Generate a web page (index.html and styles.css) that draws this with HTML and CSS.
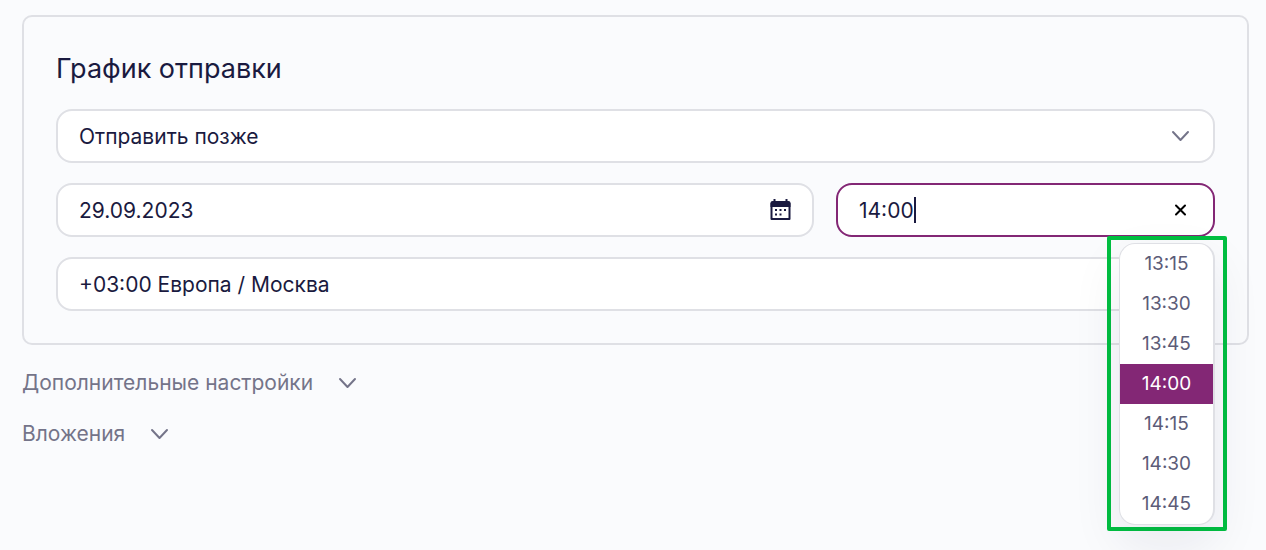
FILE: index.html
```html
<!DOCTYPE html>
<html lang="ru">
<head>
    <meta charset="UTF-8">
    <meta name="viewport" content="width=device-width, initial-scale=1.0">
    <title>График отправки</title>
    <link rel="stylesheet" href="styles.css">
</head>
<body>
    <form class="page">
        <section class="panel">
            <h2>График отправки</h2>
            <div class="field">
                <select class="control" aria-label="Когда отправить">
                    <option>Отправить позже</option>
                </select>
                <svg class="chevron field-icon" viewBox="0 0 24 24"><path d="M4 8l7.500 8 7.500-8"/></svg>
            </div>
            <div class="row">
                <div class="field">
                    <input class="control" type="text" value="29.09.2023" aria-label="Дата">
                    <button class="icon-btn field-icon" type="button" aria-label="Открыть календарь">
                        <svg viewBox="0 0 24 24">
                            <path class="cal-frame" d="M3.500 5.500h18v15.500h-18z"/>
                            <path class="cal-fill" d="M2.500 5a2 2 0 0 1 2-2h16a2 2 0 0 1 2 2v4h-20zM5.500 1h2v3h-2zM17.500 1h2v3h-2zM7 11h2v2H7zM11.500 11h2v2h-2zM16 11h2v2h-2zM7 15.500h2v2H7zM11.500 15.500h2v2h-2z"/>
                        </svg>
                    </button>
                </div>
                <div class="field">
                    <input class="control active" type="text" value="14:00" aria-label="Время">
                    <span class="caret"></span>
                    <button class="icon-btn field-icon" type="button" aria-label="Очистить">
                        <svg class="cross" viewBox="0 0 24 24"><path d="M7 7.500l9 9M16 7.500l-9 9"/></svg>
                    </button>
                    <div class="highlight">
                        <ul class="times" role="listbox" aria-label="Время">
                            <li role="option">13:15</li>
                            <li role="option">13:30</li>
                            <li role="option">13:45</li>
                            <li role="option" class="selected" aria-selected="true">14:00</li>
                            <li role="option">14:15</li>
                            <li role="option">14:30</li>
                            <li role="option">14:45</li>
                        </ul>
                    </div>
                </div>
            </div>
            <div class="field">
                <select class="control" aria-label="Часовой пояс">
                    <option>+03:00 Европа / Москва</option>
                </select>
                <svg class="chevron field-icon" viewBox="0 0 24 24"><path d="M4 8l7.500 8 7.500-8"/></svg>
            </div>
        </section>
        <button class="toggle" type="button">Дополнительные настройки
            <svg class="chevron" viewBox="0 0 24 24"><path d="M4 8l7.500 8 7.500-8"/></svg>
        </button>
        <button class="toggle" type="button">Вложения
            <svg class="chevron" viewBox="0 0 24 24"><path d="M4 8l7.500 8 7.500-8"/></svg>
        </button>
    </form>
</body>
</html>
```
FILE: styles.css
```css
* { margin: 0; padding: 0; box-sizing: border-box; }
body { font-family: Inter, "Liberation Sans", sans-serif; font-size: 21px; background: #fafbfd; color: #1a1a40; }
button { font: inherit; background: none; border: none; cursor: pointer; }
.page { min-height: 100vh; padding: 15px 17px 0 22px; display: flex; flex-direction: column; align-items: flex-start; }

.panel { width: 100%; padding: 32px; border: 2px solid #dfe0e5; border-radius: 10px; display: flex; flex-direction: column; gap: 20px; margin-bottom: 12px; }
.panel h2 { font-size: 27px; font-weight: 400; line-height: 40px; }
.row { display: grid; grid-template-columns: 2fr 1fr; gap: 22px; }
.field { position: relative; }
.control { display: block; width: 100%; height: 54px; padding: 0 60px 0 21px; font: inherit; color: inherit; background: #fff; border: 2px solid #dfe0e5; border-radius: 16px; appearance: none; outline: none; }
.control.active { border-color: #832775; }
.field-icon { position: absolute; right: 22px; top: 15px; }
.icon-btn, .icon-btn svg { display: block; width: 24px; height: 24px; }
.chevron { width: 24px; height: 24px; fill: none; stroke: #747489; stroke-width: 2; stroke-linecap: round; stroke-linejoin: round; }
.cal-frame { fill: none; stroke: #1a1a40; stroke-width: 2; stroke-linejoin: round; }
.cal-fill { fill: #1a1a40; }
.cross { fill: none; stroke: #000; stroke-width: 2; stroke-linecap: round; }
.caret { position: absolute; left: 78px; top: 14px; width: 2px; height: 26px; background: #1a1a40; }

/* time list under the field */
.highlight { position: absolute; z-index: 1; top: 53px; right: -12px; width: 120px; padding: 3px 8px 2px; border: 4px solid #00bf41; border-radius: 2px; }
.times { list-style: none; overflow: hidden; background: #fff; border: 1px solid #dfe0e5; border-right-width: 2px; border-radius: 16px; box-shadow: 0 20px 50px rgba(26, 26, 64, 0.08); font-size: 19px; line-height: 40px; text-align: center; color: #5c5c78; }
.times .selected { background: #832775; color: #fff; }

.toggle { display: flex; align-items: center; gap: 23px; line-height: 51px; color: #747489; }
```
